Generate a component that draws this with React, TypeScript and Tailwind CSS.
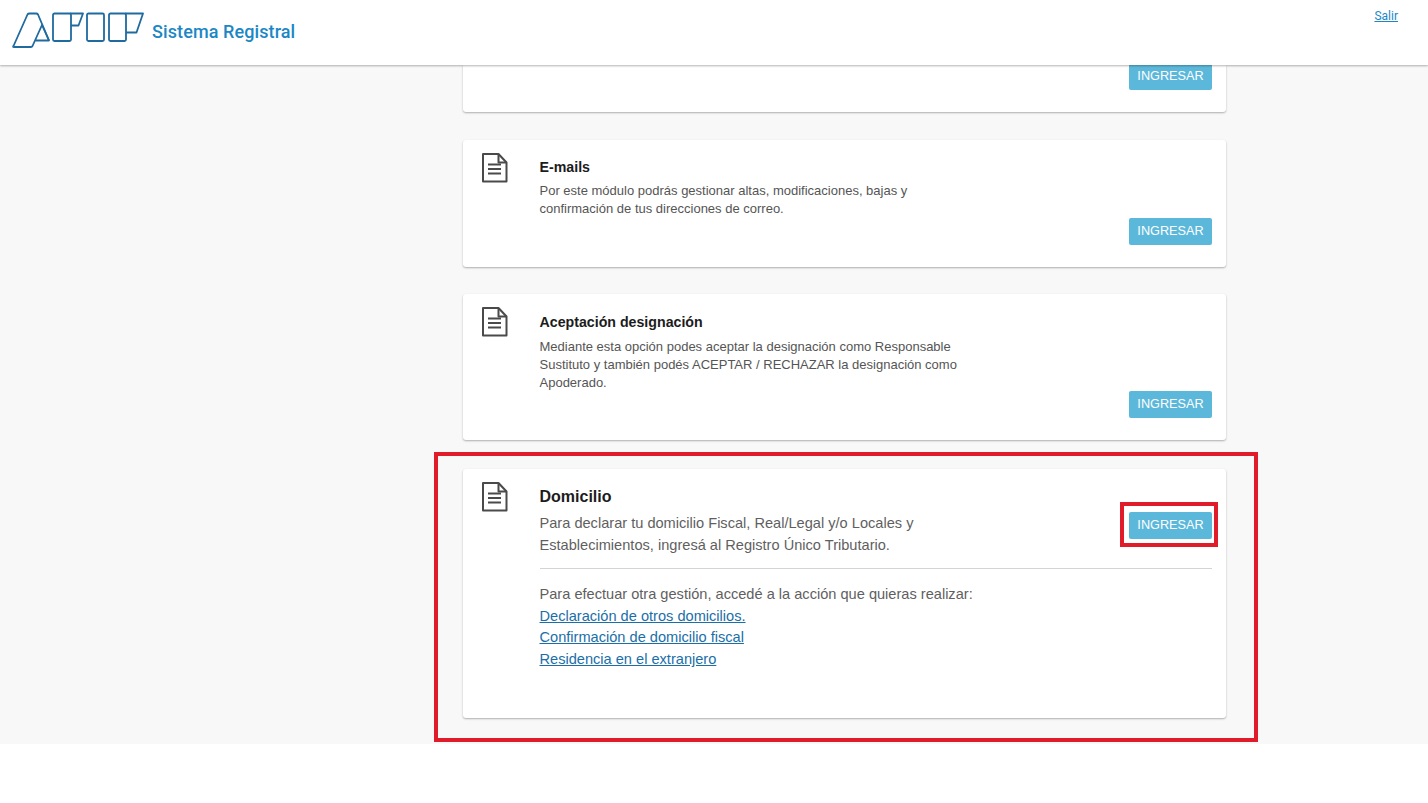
const DocIcon = () => (
  <svg width="28" height="30" viewBox="0 0 28 30" fill="none" stroke="#4a4a4a" strokeWidth="2" className="shrink-0">
    <path d="M2 1h15.5l8 8.5V28.5H2z" strokeLinejoin="round" />
    <path d="M17.5 1v8.5h8" strokeLinejoin="round" />
    <path d="M7 11.5h13M7 16h13M7 20.5h13" />
  </svg>
);

const Button = () => (
  <button className="w-[83px] h-[27px] rounded-[2px] bg-[#5bb8da] pt-[1px] text-[12.7px] text-white">
    INGRESAR
  </button>
);

const cards = [
  {
    title: "E-mails",
    text: ["Por este módulo podrás gestionar altas, modificaciones, bajas y", "confirmación de tus direcciones de correo."],
    height: "h-[127px]",
    margin: "mt-[28px]",
    titleTop: "",
    textTop: "mt-[1px]",
    buttonTop: "",
  },
  {
    title: "Aceptación designación",
    text: [
      "Mediante esta opción podes aceptar la designación como Responsable",
      "Sustituto y también podés ACEPTAR / RECHAZAR la designación como",
      "Apoderado.",
    ],
    height: "h-[146px]",
    margin: "mt-[27px]",
    titleTop: "mt-[1px]",
    textTop: "mt-[2px]",
    buttonTop: "-mt-[1px]",
  },
];

export default function App() {
  return (
    <div className="relative w-[1428px] h-[803px] overflow-hidden bg-white font-['Liberation_Sans',Arial,sans-serif]">
      {/* Header */}
      <header className="relative z-10 flex h-[65px] items-start bg-white shadow-[0_1px_2px_rgba(0,0,0,0.3)]">
        <svg width="134" height="38" viewBox="0 0 134 38" fill="none" stroke="#1f6a9f" strokeWidth="1.8" strokeLinejoin="round" className="ml-[12px] mt-[12px]">
          {/* A */}
          <path d="M1.5 34 Q0.5 35 2 35 H19 Q20 35 20.5 34 L30 13 L37 28.5 H23" />
          <path d="M1.5 34 L15.5 2.5 Q16 1.5 17.5 1.5 H24 Q25.5 1.5 26 2.5 L37 28.5" />
          {/* F */}
          <rect x="41" y="1.5" width="18" height="27.5" rx="1.5" />
          <path d="M58 1.5 H71 L66.5 13.5 H59" />
          {/* I */}
          <rect x="75" y="1.5" width="17" height="27.5" rx="1.5" />
          {/* P */}
          <rect x="97" y="1.5" width="17" height="27.5" rx="1.5" />
          <path d="M113 1.5 H131 L124.5 20.5 H114" />
        </svg>
        <span className="ml-[6px] mt-[18px] text-[18px] font-['Roboto',sans-serif] font-medium text-[#1b87c5] tracking-[0.1px]">
          Sistema Registral
        </span>
        <a className="ml-auto mr-[30px] mt-[7px] text-[12px] text-[#1b87c5] underline font-['Roboto',sans-serif]">Salir</a>
      </header>

      {/* Content */}
      <main className="h-[679px] overflow-hidden bg-[#f8f8f8] pl-[463px]">
        <div className="w-[763px]">
          <div className="flex h-[47px] items-start justify-end rounded-b-[3px] bg-white pr-[14px] shadow-[0_1px_2px_rgba(0,0,0,0.3)]">
            <div className="-mt-[2px]"><Button /></div>
          </div>

          {cards.map((card) => (
            <div
              key={card.title}
              className={`${card.margin} ${card.height} flex rounded-[3px] bg-white pl-[18px] pr-[14px] pt-[13px] shadow-[0_1px_2px_rgba(0,0,0,0.3)]`}
            >
              <DocIcon />
              <div className="ml-[30.5px] flex-1">
                <h3 className={`${card.titleTop} text-[14.2px] leading-[28px] font-bold text-[#1c1c1c]`}>{card.title}</h3>
                <div className={`${card.textTop} text-[13px] leading-[18px] text-[#555]`}>
                  {card.text.map((t) => <p key={t}>{t}</p>)}
                </div>
                <div className={`flex justify-end ${card.buttonTop}`}><Button /></div>
              </div>
            </div>
          ))}

          {/* Domicilio */}
          <div className="mt-[29px] flex h-[249px] rounded-[3px] bg-white pl-[18px] pr-[14px] pt-[13px] shadow-[0_1px_2px_rgba(0,0,0,0.3)]">
            <DocIcon />
            <div className="ml-[30.5px] flex-1">
              <div className="flex h-[87px] items-start justify-between border-b border-[#d4d4d4]">
                <div>
                  <h3 className="mt-[1px] text-[16px] leading-[28px] font-bold text-[#1c1c1c]">Domicilio</h3>
                  <div className="text-[14.6px] leading-[22px] text-[#5f5f5f] mt-[1px]">
                    <p>Para declarar tu domicilio Fiscal, Real/Legal y/o Locales y</p>
                    <p>Establecimientos, ingresá al Registro Único Tributario.</p>
                  </div>
                </div>
                <div className="mt-[30px]"><Button /></div>
              </div>
              <div className="mt-[15px] text-[14.6px] leading-[21.7px] text-[#5f5f5f]">
                <p>Para efectuar otra gestión, accedé a la acción que quieras realizar:</p>
                <p><a className="text-[#1a6fa8] underline">Declaración de otros domicilios.</a></p>
                <p><a className="text-[#1a6fa8] underline">Confirmación de domicilio fiscal</a></p>
                <p><a className="text-[#1a6fa8] underline">Residencia en el extranjero</a></p>
              </div>
            </div>
          </div>
        </div>
      </main>

      {/* Red highlights drawn over the screenshot */}
      <div className="absolute left-[434px] top-[452px] h-[290px] w-[824px] border-[4px] border-[#e01b2a]" />
      <div className="absolute left-[1120px] top-[502px] h-[45px] w-[98px] border-[4px] border-[#e01b2a]" />
    </div>
  );
}
